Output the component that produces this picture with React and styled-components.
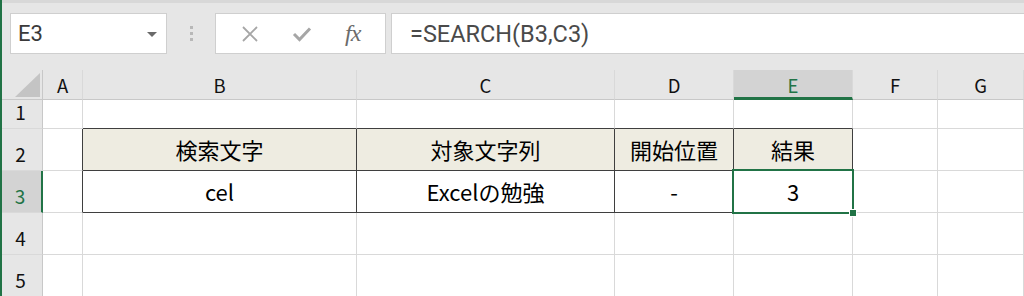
import React from 'react';
import styled, { createGlobalStyle } from 'styled-components';

const GREEN = '#217346';
const GRID = '#d9d9d9';
const EDGE = '#3f3f3f';

const Global = createGlobalStyle`
  html, body {
    margin: 0;
    padding: 0;
    background: #ffffff;
  }
`

const Window = styled.div`
  width: 1024px;
  height: 296px;
  overflow: hidden;
  box-sizing: border-box;
  border-left: 2px solid ${GREEN};
  background: #e6e6e6;
  font-family: "Noto Sans CJK JP", "Noto Sans", sans-serif;
`

const FormulaBar = styled.div`
  height: 70px;
  box-sizing: border-box;
  border-top: 3px solid #d8d8d8;
  padding: 10px 0 0 8px;
  display: flex;
  align-items: flex-start;
`

const InputBox = styled.div`
  height: 41px;
  box-sizing: border-box;
  background: #ffffff;
  border: 1px solid #cfcfcf;
  display: flex;
  align-items: center;
`

const NameBox = styled(InputBox)`
  width: 157px;
  padding: 0 9px 0 7px;
  justify-content: space-between;
  font-family: Roboto, "Liberation Sans", sans-serif;
  font-size: 22px;
  color: #3a3a3a;
`

const Caret = styled.span`
  width: 0;
  height: 0;
  border-left: 5px solid transparent;
  border-right: 5px solid transparent;
  border-top: 5px solid #6a6a6a;
  margin-top: 1px;
`

const Grip = styled.div`
  width: 48px;
  height: 41px;
  display: flex;
  flex-direction: column;
  align-items: center;
  justify-content: center;
  gap: 3px;
  span {
    width: 3px;
    height: 3px;
    background: #b8b8b8;
  }
`

const ActionBox = styled(InputBox)`
  width: 171px;
  justify-content: space-around;
  padding: 0 8px;
  margin-right: 5px;
`

const Fx = styled.span`
  font-family: "Liberation Serif", serif;
  font-style: italic;
  font-size: 24px;
  color: #6b6b6b;
  letter-spacing: -1px;
`

const FormulaInput = styled(InputBox)`
  flex: 1;
  border-right: none;
  padding-left: 18px;
  font-family: Roboto, "Liberation Sans", sans-serif;
  font-size: 23.5px;
  color: #4a4a4a;
`

const Sheet = styled.div`
  display: grid;
  grid-template-columns: 41px 40px 274px 258px 119px 119px 85px 86px;
  grid-template-rows: 30px 29px 42px 42px 42px 42px;
  background: #ffffff;
`

const Corner = styled.div`
  background: #e6e6e6;
  box-sizing: border-box;
  border-right: 1px solid #c8c8c8;
  border-bottom: 1px solid #c8c8c8;
  display: flex;
  align-items: flex-end;
  justify-content: flex-end;
  padding: 0 2px 2px 0;
`

const ColHead = styled.div`
  box-sizing: border-box;
  background: ${p => (p.$active ? '#d3d3d3' : '#e6e6e6')};
  color: ${p => (p.$active ? GREEN : '#111111')};
  border-right: 1px solid ${GRID};
  border-bottom: ${p => (p.$active ? `3px solid ${GREEN}` : '1px solid #c8c8c8')};
  display: flex;
  align-items: center;
  justify-content: center;
  font-size: 18.5px;
  padding-top: ${p => (p.$active ? '2px' : '0')};
`

const RowHead = styled.div`
  box-sizing: border-box;
  background: ${p => (p.$active ? '#d3d3d3' : '#e6e6e6')};
  color: ${p => (p.$active ? GREEN : '#111111')};
  border-right: ${p => (p.$active ? `2px solid ${GREEN}` : '1px solid #c8c8c8')};
  border-bottom: 1px solid ${GRID};
  display: flex;
  align-items: flex-end;
  justify-content: center;
  padding-bottom: 3px;
  padding-right: 3px;
  font-size: 19px;
`

const Cell = styled.div`
  position: relative;
  box-sizing: border-box;
  background: ${p => (p.$head ? '#eeece1' : '#ffffff')};
  border-right: 1px solid ${p => (p.$edgeRight ? EDGE : GRID)};
  border-bottom: 1px solid ${p => (p.$edgeBottom ? EDGE : GRID)};
  display: flex;
  align-items: flex-end;
  justify-content: center;
  padding-bottom: 5px;
  font-size: 22px;
  color: #000000;
`

const Selection = styled.div`
  position: absolute;
  z-index: 2;
  left: -2px;
  top: -2px;
  right: -2px;
  bottom: -2px;
  border: 2px solid ${GREEN};
  pointer-events: none;
`

const FillHandle = styled.span`
  position: absolute;
  right: -5px;
  bottom: -5px;
  width: 6px;
  height: 6px;
  background: ${GREEN};
  border: 1px solid #ffffff;
`

const columns = ['A', 'B', 'C', 'D', 'E', 'F', 'G'];
const rowHeights = [1, 2, 3, 4, 5];

const data = {
  2: { B: '検索文字', C: '対象文字列', D: '開始位置', E: '結果' },
  3: { B: 'cel', C: 'Excelの勉強', D: '-', E: '3' },
};

const inTable = (row, col) => (row === 2 || row === 3) && 'BCDE'.includes(col);

function CloseIcon() {
  return (
    <svg width="18" height="18" viewBox="0 0 18 18">
      <path d="M2 2 L16 16 M16 2 L2 16" stroke="#a6a6a6" strokeWidth="1.8" fill="none" />
    </svg>
  );
}

function CheckIcon() {
  return (
    <svg width="20" height="16" viewBox="0 0 20 16">
      <path d="M2 8 L7.5 13.5 L18 2.5" stroke="#a6a6a6" strokeWidth="3" fill="none" />
    </svg>
  );
}

function CornerMark() {
  return (
    <svg width="25" height="24" viewBox="0 0 25 24">
      <polygon points="25,0 25,24 0,24" fill="#c4c4c4" />
    </svg>
  );
}

export default function App() {
  return (
    <Window>
      <Global />
      <FormulaBar>
        <NameBox>
          E3
          <Caret />
        </NameBox>
        <Grip>
          <span />
          <span />
          <span />
        </Grip>
        <ActionBox>
          <CloseIcon />
          <CheckIcon />
          <Fx>fx</Fx>
        </ActionBox>
        <FormulaInput>=SEARCH(B3,C3)</FormulaInput>
      </FormulaBar>
      <Sheet>
        <Corner>
          <CornerMark />
        </Corner>
        {columns.map(c => (
          <ColHead key={c} $active={c === 'E'}>{c}</ColHead>
        ))}
        {rowHeights.map(r => (
          <React.Fragment key={r}>
            <RowHead $active={r === 3}>{r}</RowHead>
            {columns.map(c => {
              const here = inTable(r, c);
              const rightNeighbour = inTable(r, columns[columns.indexOf(c) + 1]);
              const below = inTable(r + 1, c);
              return (
                <Cell
                  key={c}
                  $head={r === 2 && here}
                  $edgeRight={here || rightNeighbour}
                  $edgeBottom={here || below}
                >
                  {data[r] && data[r][c]}
                  {r === 3 && c === 'E' && (
                    <Selection>
                      <FillHandle />
                    </Selection>
                  )}
                </Cell>
              );
            })}
          </React.Fragment>
        ))}
      </Sheet>
    </Window>
  );
}
